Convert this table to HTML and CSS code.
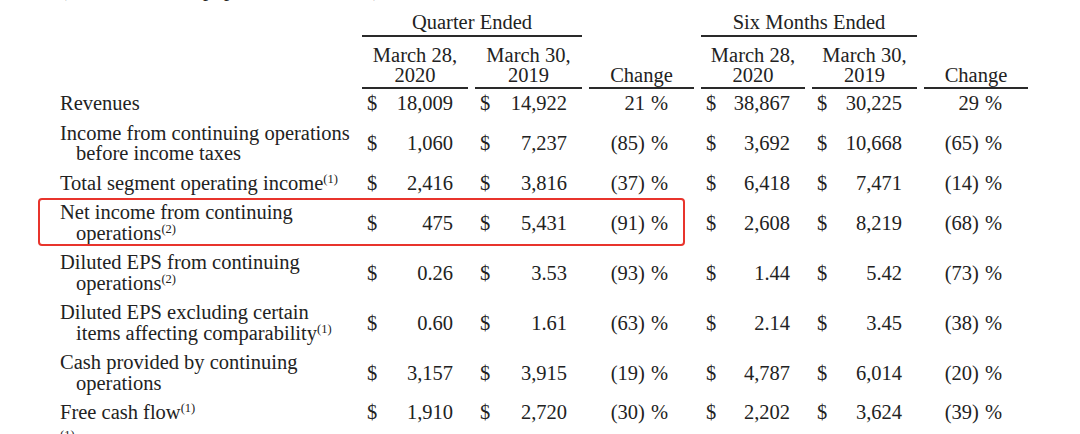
FILE: index.html
```html
<!DOCTYPE html>
<html lang="en">
<head>
<meta charset="utf-8">
<title>Financial Highlights</title>
<link rel="stylesheet" href="styles.css">
</head>
<body>
<div class="page">
  <p class="intro">(in millions, except per share amounts):</p>
  <div class="fin">
    <div class="row hdr1">
      <div class="lbl"></div>
      <div class="grp">Quarter Ended</div>
      <div></div>
      <div class="grp">Six Months Ended</div>
      <div></div>
    </div>
    <div class="row hdr2">
      <div class="lbl"></div>
      <div class="col">March 28,<br>2020</div>
      <div class="col">March 30,<br>2019</div>
      <div class="col">Change</div>
      <div class="col">March 28,<br>2020</div>
      <div class="col">March 30,<br>2019</div>
      <div class="col">Change</div>
    </div>

    <div class="row body-row">
      <div class="lbl">Revenues</div>
      <div class="amt"><span>$</span><span>18,009</span></div>
      <div class="amt"><span>$</span><span>14,922</span></div>
      <div class="chg">21<span class="pc">%</span></div>
      <div class="amt"><span>$</span><span>38,867</span></div>
      <div class="amt"><span>$</span><span>30,225</span></div>
      <div class="chg">29<span class="pc">%</span></div>
    </div>

    <div class="row body-row">
      <div class="lbl">Income from continuing operations<br>before income taxes</div>
      <div class="amt"><span>$</span><span>1,060</span></div>
      <div class="amt"><span>$</span><span>7,237</span></div>
      <div class="chg">(85)<span class="pc">%</span></div>
      <div class="amt"><span>$</span><span>3,692</span></div>
      <div class="amt"><span>$</span><span>10,668</span></div>
      <div class="chg">(65)<span class="pc">%</span></div>
    </div>

    <div class="row body-row">
      <div class="lbl">Total segment operating income<sup>(1)</sup></div>
      <div class="amt"><span>$</span><span>2,416</span></div>
      <div class="amt"><span>$</span><span>3,816</span></div>
      <div class="chg">(37)<span class="pc">%</span></div>
      <div class="amt"><span>$</span><span>6,418</span></div>
      <div class="amt"><span>$</span><span>7,471</span></div>
      <div class="chg">(14)<span class="pc">%</span></div>
    </div>

    <div class="row body-row">
      <div class="lbl">Net income from continuing<br>operations<sup>(2)</sup></div>
      <div class="amt"><span>$</span><span>475</span></div>
      <div class="amt"><span>$</span><span>5,431</span></div>
      <div class="chg">(91)<span class="pc">%</span></div>
      <div class="amt"><span>$</span><span>2,608</span></div>
      <div class="amt"><span>$</span><span>8,219</span></div>
      <div class="chg">(68)<span class="pc">%</span></div>
    </div>

    <div class="row body-row">
      <div class="lbl">Diluted EPS from continuing<br>operations<sup>(2)</sup></div>
      <div class="amt"><span>$</span><span>0.26</span></div>
      <div class="amt"><span>$</span><span>3.53</span></div>
      <div class="chg">(93)<span class="pc">%</span></div>
      <div class="amt"><span>$</span><span>1.44</span></div>
      <div class="amt"><span>$</span><span>5.42</span></div>
      <div class="chg">(73)<span class="pc">%</span></div>
    </div>

    <div class="row body-row">
      <div class="lbl">Diluted EPS excluding certain<br>items affecting comparability<sup>(1)</sup></div>
      <div class="amt"><span>$</span><span>0.60</span></div>
      <div class="amt"><span>$</span><span>1.61</span></div>
      <div class="chg">(63)<span class="pc">%</span></div>
      <div class="amt"><span>$</span><span>2.14</span></div>
      <div class="amt"><span>$</span><span>3.45</span></div>
      <div class="chg">(38)<span class="pc">%</span></div>
    </div>

    <div class="row body-row">
      <div class="lbl">Cash provided by continuing<br>operations</div>
      <div class="amt"><span>$</span><span>3,157</span></div>
      <div class="amt"><span>$</span><span>3,915</span></div>
      <div class="chg">(19)<span class="pc">%</span></div>
      <div class="amt"><span>$</span><span>4,787</span></div>
      <div class="amt"><span>$</span><span>6,014</span></div>
      <div class="chg">(20)<span class="pc">%</span></div>
    </div>

    <div class="row body-row">
      <div class="lbl">Free cash flow<sup>(1)</sup></div>
      <div class="amt"><span>$</span><span>1,910</span></div>
      <div class="amt"><span>$</span><span>2,720</span></div>
      <div class="chg">(30)<span class="pc">%</span></div>
      <div class="amt"><span>$</span><span>2,202</span></div>
      <div class="amt"><span>$</span><span>3,624</span></div>
      <div class="chg">(39)<span class="pc">%</span></div>
    </div>
  </div>
  <p class="foot"><sup>(1)</sup> Total segment operating income, diluted EPS excluding certain items affecting comparability and free cash flow are non-GAAP financial measures.</p>
  <div class="callout"></div>
</div>
</body>
</html>
```

FILE: styles.css
```css
* {
  box-sizing: border-box;
}

html,
body {
  margin: 0;
  padding: 0;
  background: #ffffff;
}

body {
  font-family: "Liberation Serif", "Times New Roman", serif;
  font-size: 20.5px;
  line-height: 20.5px;
  color: #222222;
  height: 434px;
  overflow: hidden;
}

.page {
  position: relative;
  display: flow-root;
  padding-left: 60px;
}

.intro {
  margin: -21px 0 0;
  white-space: nowrap;
}

.row {
  display: grid;
  grid-template-columns: 295px 106px 107px 105px 104px 105px 104px;
  column-gap: 7px;
}

.hdr1 {
  padding-top: 12.8px;
}

.grp {
  grid-column: span 2;
  text-align: center;
  padding-bottom: 2.2px;
  border-bottom: 2px solid #2a2a2a;
}

.hdr2 {
  align-items: end;
}

.hdr2 .col {
  text-align: center;
  line-height: 20px;
  padding-top: 7.6px;
  padding-bottom: 2.4px;
  border-bottom: 2px solid #2a2a2a;
}

.body-row {
  align-items: center;
  padding: 4.5px 0;
}

.lbl {
  white-space: nowrap;
  padding-left: 16px;
  text-indent: -16px;
}

.amt {
  display: flex;
  justify-content: space-between;
  padding: 0 15px 0 5px;
}

.chg {
  text-align: right;
  padding-right: 26px;
}

.pc {
  margin-left: 6px;
}

sup {
  font-size: 12.5px;
  line-height: 0;
  vertical-align: 7px;
}

.foot {
  margin: 6px 0 0;
  font-size: 16px;
  white-space: nowrap;
}

.foot sup {
  font-size: 12.5px;
  vertical-align: 9px;
}

.callout {
  position: absolute;
  left: 38px;
  top: 198px;
  width: 647px;
  height: 48px;
  border: 2px solid #e8342c;
  border-radius: 4px;
}
```
